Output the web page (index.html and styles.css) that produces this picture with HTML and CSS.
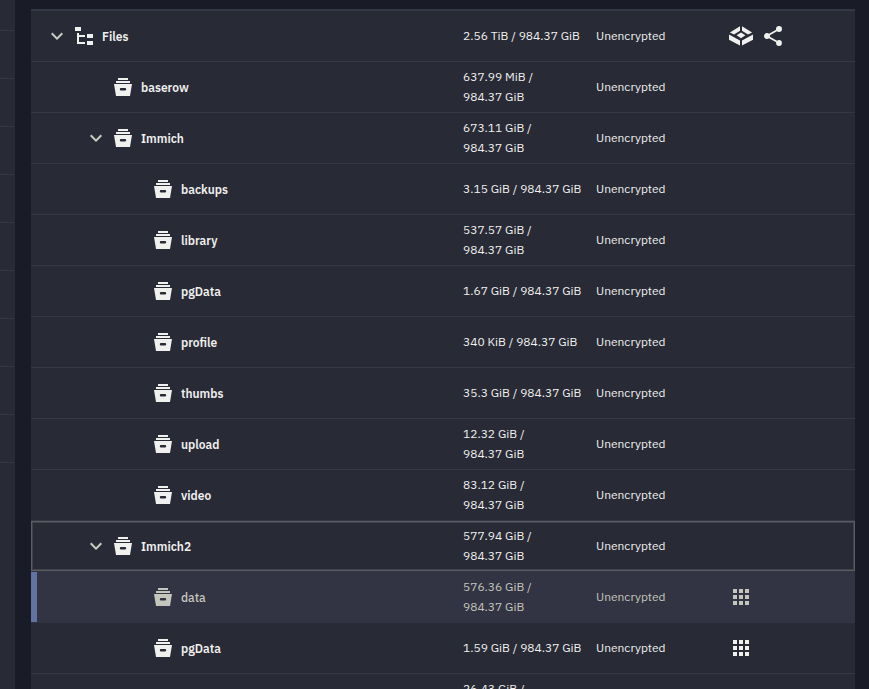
FILE: index.html
```
<!DOCTYPE html>
<html lang="en">
<head>
<meta charset="utf-8">
<title>Datasets</title>
<link rel="stylesheet" href="styles.css">
</head>
<body>
<svg class="sprite" aria-hidden="true">
  <symbol id="chevron" viewBox="0 0 24 24"><path d="M7.41 8.59 12 13.17l4.59-4.58L18 10l-6 6-6-6z"/></symbol>
  <symbol id="root" viewBox="0 0 24 24"><path d="M3 3h6v4H3zM15 10h6v4h-6zM15 17h6v4h-6zM5 9h2v2h6v2H7v5h6v2H5z"/></symbol>
  <symbol id="dataset" viewBox="0 0 24 24"><path fill-rule="evenodd" d="M7 3h10v2H7zM5 6h14v2H5zM3 9h18l-2 12H5zM10 13a1.200 1.200 0 0 0 0 2.400h4a1.200 1.200 0 0 0 0-2.400z"/></symbol>
  <symbol id="apps" viewBox="0 0 24 24"><path d="M4 4h4v4H4zM10 4h4v4h-4zM16 4h4v4h-4zM4 10h4v4H4zM10 10h4v4h-4zM16 10h4v4h-4zM4 16h4v4H4zM10 16h4v4h-4zM16 16h4v4h-4z"/></symbol>
  <symbol id="system" viewBox="0 0 24 24"><path d="M11 2.300v4.400L5 10.400.900 8.400zM13 2.300v4.400l6 3.700 4.100-2zM12 8.600l4.400 2.700-4.400 2.900-4.400-2.900zM0 10.500l11 6v5L0 15.700zM24 10.500l-11 6v5l11-5.800z"/></symbol>
  <symbol id="share" viewBox="0 0 24 24"><path d="M18 16.080c-.760 0-1.440.300-1.960.770L8.910 12.700c.050-.230.090-.460.090-.700s-.040-.470-.090-.700l7.050-4.110c.540.500 1.250.810 2.040.810a3 3 0 1 0-3-3c0 .240.040.470.090.700L8.040 9.810A3 3 0 1 0 6 15c.790 0 1.500-.310 2.040-.810l7.120 4.150c-.050.210-.080.430-.080.660a2.920 2.920 0 1 0 2.920-2.920z"/></symbol>
</svg>
<div class="page">
  <aside class="side"><div></div><div></div><div></div><div></div><div></div><div></div><div></div><div></div><div></div><div></div></aside>
  <main class="panel">
    <table class="tree">
      <colgroup><col><col class="col-size"><col class="col-enc"><col class="col-roles"></colgroup>
      <tbody>
        <tr><td><div class="name l0"><button class="toggle" aria-label="Toggle Files"><svg><use href="#chevron"/></svg></button><svg><use href="#root"/></svg><span>Files</span></div></td><td>2.56&nbsp;TiB / 984.37&nbsp;GiB</td><td>Unencrypted</td><td><div class="roles"><svg><use href="#system"/></svg><svg><use href="#share"/></svg></div></td></tr>
        <tr><td><div class="name l1"><i class="spacer"></i><svg><use href="#dataset"/></svg><span>baserow</span></div></td><td>637.99&nbsp;MiB / 984.37&nbsp;GiB</td><td>Unencrypted</td><td></td></tr>
        <tr><td><div class="name l1"><button class="toggle" aria-label="Toggle Immich"><svg><use href="#chevron"/></svg></button><svg><use href="#dataset"/></svg><span>Immich</span></div></td><td>673.11&nbsp;GiB / 984.37&nbsp;GiB</td><td>Unencrypted</td><td></td></tr>
        <tr><td><div class="name l2"><i class="spacer"></i><svg><use href="#dataset"/></svg><span>backups</span></div></td><td>3.15&nbsp;GiB / 984.37&nbsp;GiB</td><td>Unencrypted</td><td></td></tr>
        <tr><td><div class="name l2"><i class="spacer"></i><svg><use href="#dataset"/></svg><span>library</span></div></td><td>537.57&nbsp;GiB / 984.37&nbsp;GiB</td><td>Unencrypted</td><td></td></tr>
        <tr><td><div class="name l2"><i class="spacer"></i><svg><use href="#dataset"/></svg><span>pgData</span></div></td><td>1.67&nbsp;GiB / 984.37&nbsp;GiB</td><td>Unencrypted</td><td></td></tr>
        <tr><td><div class="name l2"><i class="spacer"></i><svg><use href="#dataset"/></svg><span>profile</span></div></td><td>340&nbsp;KiB / 984.37&nbsp;GiB</td><td>Unencrypted</td><td></td></tr>
        <tr><td><div class="name l2"><i class="spacer"></i><svg><use href="#dataset"/></svg><span>thumbs</span></div></td><td>35.3&nbsp;GiB / 984.37&nbsp;GiB</td><td>Unencrypted</td><td></td></tr>
        <tr><td><div class="name l2"><i class="spacer"></i><svg><use href="#dataset"/></svg><span>upload</span></div></td><td>12.32&nbsp;GiB / 984.37&nbsp;GiB</td><td>Unencrypted</td><td></td></tr>
        <tr><td><div class="name l2"><i class="spacer"></i><svg><use href="#dataset"/></svg><span>video</span></div></td><td>83.12&nbsp;GiB / 984.37&nbsp;GiB</td><td>Unencrypted</td><td></td></tr>
        <tr class="focused"><td><div class="name l1"><button class="toggle" aria-label="Toggle Immich2"><svg><use href="#chevron"/></svg></button><svg><use href="#dataset"/></svg><span>Immich2</span></div></td><td>577.94&nbsp;GiB / 984.37&nbsp;GiB</td><td>Unencrypted</td><td></td></tr>
        <tr class="selected"><td><div class="name l2"><i class="spacer"></i><svg><use href="#dataset"/></svg><span>data</span></div></td><td>576.36&nbsp;GiB / 984.37&nbsp;GiB</td><td>Unencrypted</td><td><div class="roles"><svg><use href="#apps"/></svg></div></td></tr>
        <tr><td><div class="name l2"><i class="spacer"></i><svg><use href="#dataset"/></svg><span>pgData</span></div></td><td>1.59&nbsp;GiB / 984.37&nbsp;GiB</td><td>Unencrypted</td><td><div class="roles"><svg><use href="#apps"/></svg></div></td></tr>
        <tr><td></td><td>26.43&nbsp;GiB /</td><td></td><td></td></tr>
      </tbody>
    </table>
  </main>
</div>
</body>
</html>
```
FILE: styles.css
```
* { box-sizing: border-box; }
body {
  margin: 0;
  background: #191b26;
  color: #f0f0ee;
  font: 12px/20px "IBM Plex Sans", Roboto, sans-serif;
  overflow: hidden;
}
.sprite { display: none; }
svg { width: 24px; height: 24px; fill: currentColor; flex: none; }
.page { display: flex; gap: 16px; height: 100vh; padding-right: 14px; overflow: hidden; }
.side { width: 15px; background: #282a36; padding-right: 1px; }
.side div { height: 48px; border-bottom: 1px solid #343746; }
.side div:first-child { height: 31px; }
.panel { flex: 1; margin-top: 9px; border-top: 2px solid #343746; background: #282a36; overflow: hidden; }
.tree { width: 100%; table-layout: fixed; border-collapse: separate; border-spacing: 0; }
.col-size, .col-enc { width: 133px; }
.col-roles { width: 126px; }
td { height: 51px; padding: 5px 11px 5px 0; border-bottom: 1px solid #343746; vertical-align: middle; }
td:first-child, td:last-child { padding: 5px 0; }
tr:last-child td { vertical-align: top; }
.name { display: flex; align-items: center; font-weight: 600; }
.name span { margin-left: 6px; padding-top: 1px; }
.l0 { padding-left: 14px; }
.l1 { padding-left: 53px; }
.l2 { padding-left: 93px; }
.toggle, .spacer { width: 24px; height: 24px; margin-right: 3px; padding: 0; border: 0; background: none; color: #caccc2; flex: none; }
.roles { display: flex; gap: 8px; }
.focused td { border-bottom-color: #323443; box-shadow: inset 0 1px #5c5c62, inset 0 -1px #5c5c62, inset 0 2px #41424b, inset 0 -2px #41424b; }
.focused td:first-child { box-shadow: inset 1px 1px #5c5c62, inset 0 -1px #5c5c62, inset 2px 2px #41424b, inset 0 -2px #41424b; }
.focused td:last-child { box-shadow: inset -1px -1px #5c5c62, inset 0 1px #5c5c62, inset -2px -2px #41424b, inset 0 2px #41424b; }
.selected { background: #323443; color: #c4c6bd; }
.selected td { border-bottom-color: #323443; }
.selected td:first-child { box-shadow: inset 6px 0 #6272a4; }
.selected .name { font-weight: 500; }
```
